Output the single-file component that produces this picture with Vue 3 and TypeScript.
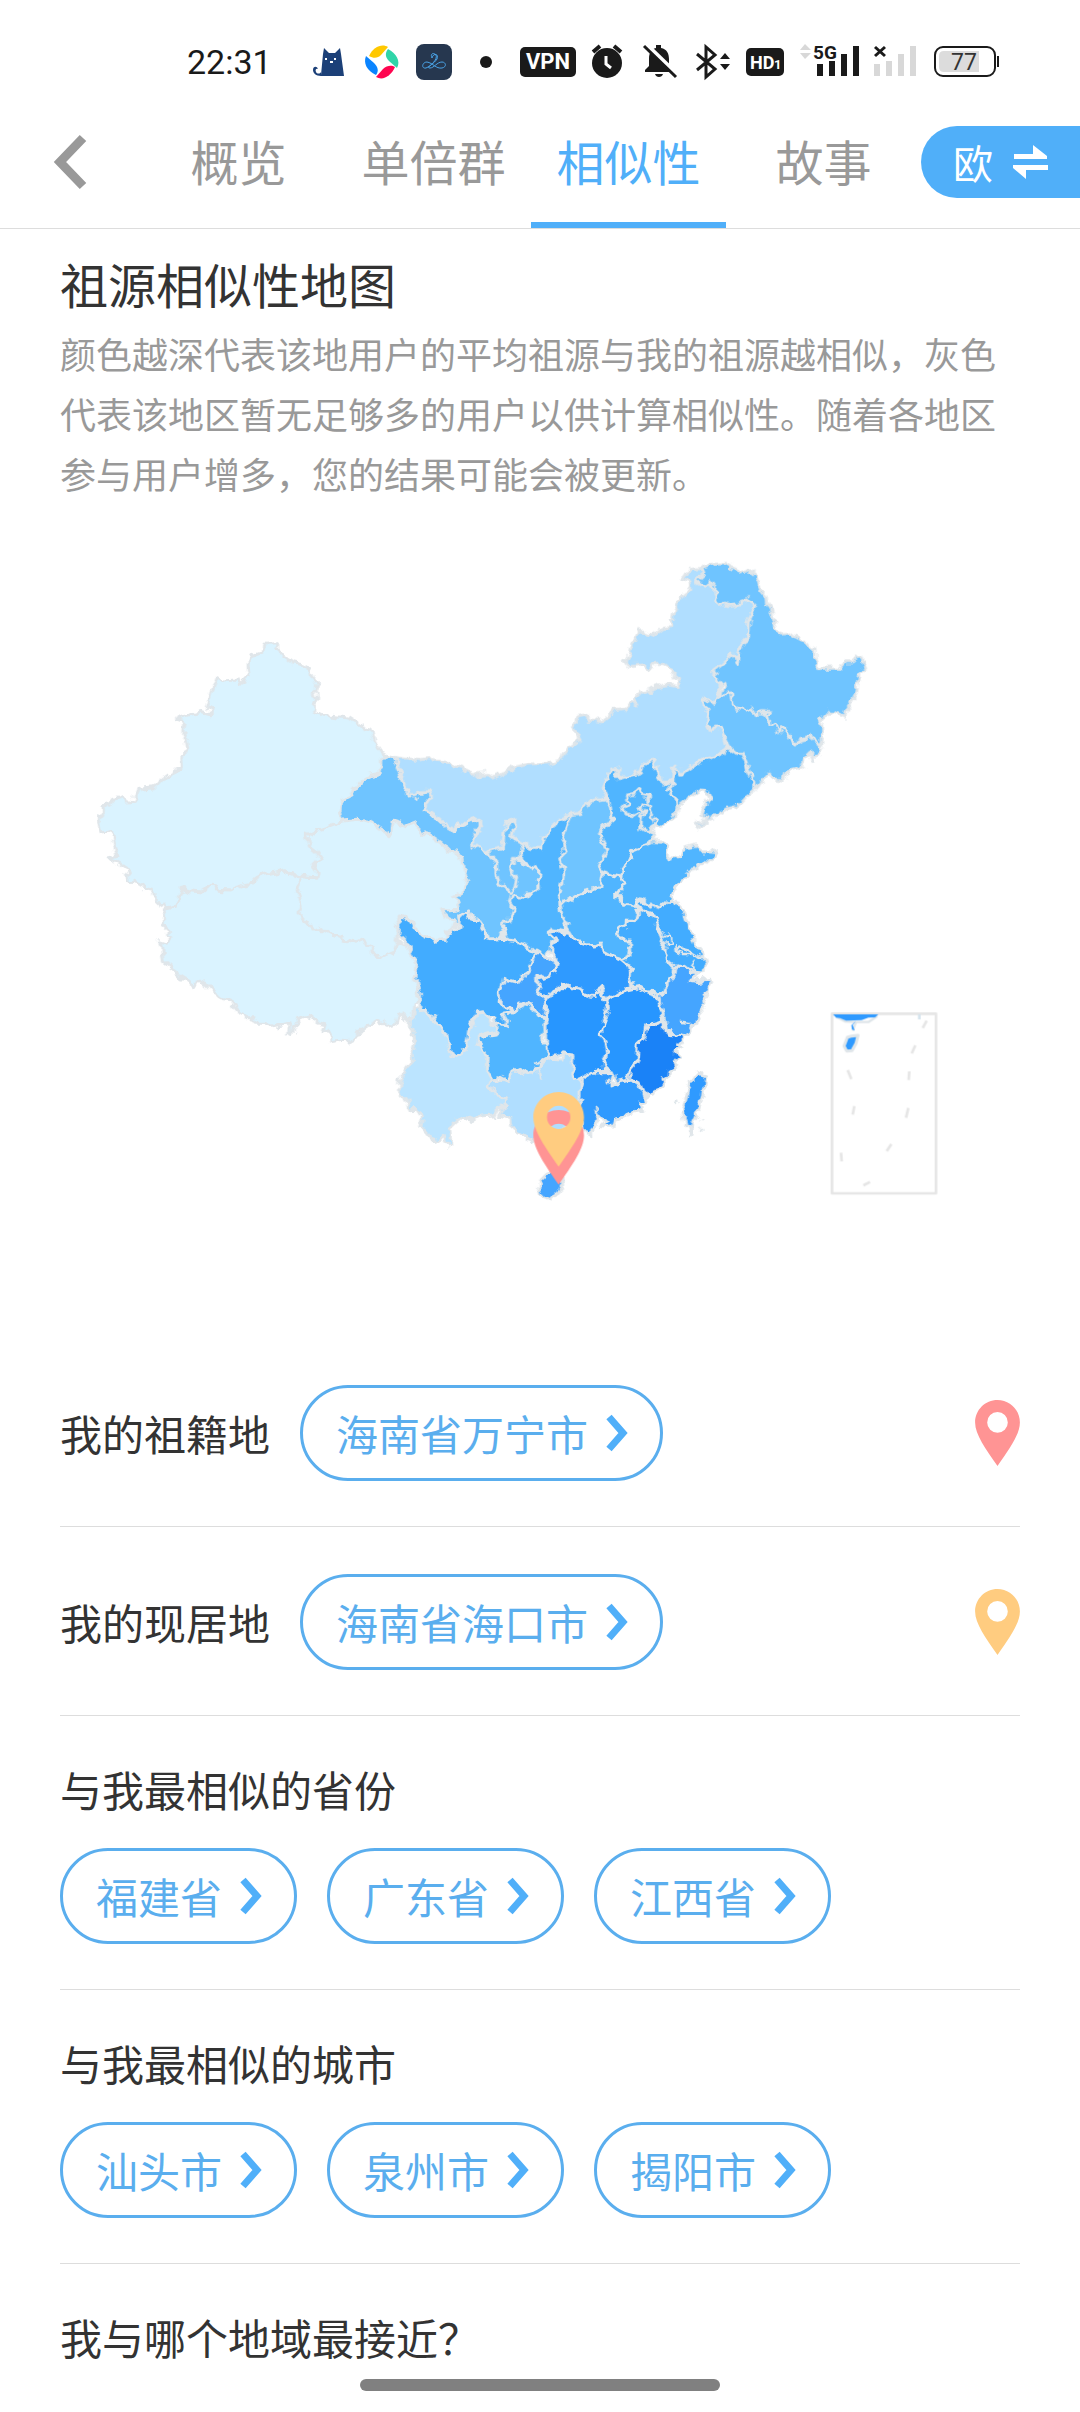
<script setup lang="ts">
import { ref } from 'vue'

interface Shape {
  d: string
  fill: string
}

interface Layer {
  shift: string
  shapes: Shape[]
}

const tabs = ['概览', '单倍群', '相似性', '故事']
const active = ref('相似性')

const places = [
  { label: '我的祖籍地', value: '海南省万宁市', color: '#ff9494' },
  { label: '我的现居地', value: '海南省海口市', color: '#ffcc80' },
]

const groups = [
  { title: '与我最相似的省份', items: ['福建省', '广东省', '江西省'] },
  { title: '与我最相似的城市', items: ['汕头市', '泉州市', '揭阳市'] },
]

const pin =
  'M76 0C34 0 0 34 0 76C0 117 36 166 76 224C116 166 152 117 152 76C152 34 118 0 76 0ZM76 41A35 35 0 1 1 76 111A35 35 0 1 1 76 41Z'

const tint = {
  ice: '#daf3ff',
  pale: '#bbe4ff',
  soft: '#b0deff',
  sky: '#6fc4ff',
  mid: '#50b5ff',
  blue: '#42acff',
  coast: '#45a5ff',
  deep: '#2f9aff',
  deeper: '#2796ff',
  top: '#1a82f7',
}

// Each layer has its own origin; later shapes cover the shared borders of earlier ones.
const layers: Layer[] = [
  {
    shift: 'translate(1140 102)',
    shapes: [
      {
        fill: tint.sky,
        d: 'M14 650L45 653L70 720L90 770L150 755L155 775L130 805L215 868L260 850L300 835L300 860L280 885L285 915L320 940L403 955L425 960L440 975L462 985L477 997L473 1020L475 1045L462 1058L445 1060L440 1074L420 1070L395 1065L400 1100L390 1145L365 1165L370 1185L340 1205L315 1185L310 1160L285 1135L260 1110L235 1130L240 1150L215 1165L200 1150L180 1110L150 1000L0 900L-120 850L-122 815L-114 778L-92 770L-50 718L-30 706L0 700L2 664Z',
      },
    ],
  },
  {
    shift: 'translate(240 342)',
    shapes: [
      {
        fill: tint.ice,
        d: 'M256 864L290 858L304 804L450 790L610 752L655 768L660 785L652 812L662 835L666 860L660 885L678 905L690 922L705 930L722 922L735 936L760 948L800 960L828 966L846 958L858 972L876 980L880 1002L905 1012L940 996L952 960L985 975L1008 1028L1006 1060L1015 1140L1002 1150L998 1190L980 1195L958 1180L950 1215L935 1225L910 1212L888 1202L860 1222L830 1238L810 1266L785 1264L752 1268L752 1250L742 1236L732 1236L738 1212L712 1206L700 1196L680 1190L662 1198L650 1218L640 1222L634 1244L626 1238L630 1208L600 1216L575 1220L555 1210L525 1210L520 1196L500 1196L490 1182L472 1172L450 1145L430 1142L422 1130L400 1115L375 1090L350 1080L340 1100L325 1085L300 1070L290 1055L268 1040L250 1025L246 995L245 980L236 962L262 970L275 955L266 948L268 930L250 915L250 880Z',
      },
      {
        fill: tint.ice,
        d: 'M680 646L700 634L784 604L830 598L855 600L872 606L900 626L932 645L936 604L955 606L980 620L1005 610L1020 625L1035 640L1055 645L1060 655L1090 675L1110 690L1128 690L1132 708L1145 712L1150 745L1162 770L1158 795L1145 812L1138 825L1124 830L1132 850L1135 868L1110 872L1085 872L1105 895L1125 905L1115 925L1098 935L1098 955L1080 958L1070 970L1058 955L1040 952L1030 945L1010 930L1000 905L975 890L955 888L950 900L960 925L952 960L940 996L905 1012L880 1002L876 980L858 972L846 958L828 966L800 960L760 948L735 936L722 922L705 930L690 922L678 905L660 885L666 860L662 835L652 812L660 785L655 768L712 774L716 758L700 738L722 716L708 695L690 682Z',
      },
      {
        fill: tint.ice,
        d: 'M590 68L552 70L548 98L515 108L504 124L505 155L510 172L495 180L478 190L470 180L430 183L410 174L402 200L395 220L382 262L396 270L393 284L382 282L360 274L330 284L290 296L312 304L308 340L318 360L322 380L324 398L302 408L304 448L285 456L268 465L240 485L225 503L178 507L170 525L160 542L134 543L128 530L100 538L92 550L66 562L68 585L55 592L55 605L62 636L80 634L98 642L102 670L112 706L82 714L100 720L118 730L140 745L148 782L165 788L190 802L218 808L226 835L235 852L256 864L290 858L304 804L330 812L362 816L392 796L410 798L412 808L450 810L490 795L520 790L535 770L560 762L585 760L610 752L635 758L655 768L672 770L712 774L716 758L700 738L722 716L708 695L690 682L680 646L700 634L740 622L784 604L778 575L786 538L808 530L820 510L850 478L870 466L900 460L902 424L914 410L890 375L880 350L876 330L858 328L830 310L805 294L770 290L730 286L702 274L700 255L710 240L706 218L714 200L708 185L696 172L690 150L665 134L640 128L612 108L600 95L590 85Z',
      },
    ],
  },
  {
    shift: 'translate(1140 102)',
    shapes: [
      {
        fill: tint.soft,
        d: 'M45 653L120 662L150 658L210 665L225 680L250 688L290 705L320 700L340 714L365 702L400 682L450 672L510 668L545 655L565 625L600 600L580 565L592 530L615 525L630 540L665 545L685 530L700 512L740 508L765 485L768 470L780 460L800 455L840 440L870 435L898 440L895 420L880 395L850 370L820 370L805 388L790 375L745 380L735 365L748 345L752 320L765 300L778 272L820 288L850 265L875 262L870 242L880 235L884 215L890 200L905 170L932 150L930 125L905 118L920 98L935 88L965 85L972 100L948 122L972 135L990 128L1005 148L1010 180L1040 196L1085 190L1105 176L1130 205L1115 225L1105 245L1104 275L1100 290L1085 310L1070 345L1030 375L995 403L1018 435L1020 465L1000 490L968 485L985 515L980 545L990 570L1018 560L1030 590L1040 625L1000 650L950 670L905 705L895 685L880 680L878 725L842 728L832 690L820 660L790 672L785 695L725 715L712 688L695 690L680 720L678 755L682 775L660 780L640 785L625 788L615 792L605 810L600 820L580 822L565 825L540 838L525 850L510 875L490 895L485 925L455 925L430 908L412 900L395 890L402 862L405 838L388 845L375 868L372 890L368 922L345 930L320 940L300 928L282 915L278 890L292 875L305 860L300 835L285 838L260 850L235 848L225 860L210 870L195 858L180 838L155 820L130 805L145 788L155 775L150 755L120 755L105 770L90 770L85 750L65 720L70 710L55 675Z',
      },
      {
        fill: tint.sky,
        d: 'M965 80L1000 73L1040 70L1055 80L1080 90L1095 100L1110 95L1128 110L1135 125L1142 150L1158 170L1160 190L1175 215L1182 240L1190 270L1200 285L1225 282L1250 292L1275 305L1285 318L1305 325L1305 355L1318 385L1348 384L1380 385L1395 368L1415 368L1430 352L1450 350L1452 370L1460 385L1440 400L1436 425L1430 455L1412 490L1400 510L1395 528L1370 520L1350 515L1338 530L1318 540L1325 560L1325 580L1322 612L1242 620L1195 590L1100 520L1050 500L1020 465L1022 448L1040 440L1038 430L1018 435L995 403L1030 375L1062 345L1072 368L1075 335L1085 310L1100 300L1104 275L1105 245L1115 225L1130 205L1105 176L1085 190L1040 196L1015 185L1005 165L1005 145L990 128L972 135L948 122L972 100Z',
      },
      {
        fill: tint.sky,
        d: 'M1020 465L1052 462L1055 490L1075 505L1095 510L1115 504L1125 520L1145 518L1165 522L1170 550L1185 555L1197 580L1215 560L1230 590L1242 610L1260 598L1290 590L1320 612L1327 630L1320 645L1300 650L1302 665L1290 640L1275 655L1272 675L1245 685L1215 695L1210 720L1180 716L1165 702L1150 718L1125 750L1118 715L1105 690L1100 665L1088 640L1070 640L1045 618L1030 590L1018 560L990 570L980 545L985 515L968 490L968 478L985 482L1000 490L1012 475Z',
      },
      {
        fill: tint.mid,
        d: 'M1045 622L1070 640L1088 640L1100 665L1105 690L1118 715L1122 752L1100 768L1085 785L1065 800L1040 806L1015 822L1000 832L975 850L948 866L952 852L975 840L985 830L965 825L975 800L990 775L980 755L950 752L930 765L915 785L895 800L885 770L862 750L878 725L885 700L880 678L895 685L905 705L925 688L950 670L975 662L1000 650L1030 642Z',
      },
      {
        fill: tint.mid,
        d: 'M685 780L670 745L680 720L695 692L712 688L710 715L725 715L755 705L785 695L790 672L820 660L832 690L842 728L878 728L862 750L885 770L895 800L880 835L860 850L845 858L825 860L815 880L820 900L790 915L760 935L745 965L728 990L722 1012L695 1006L665 995L658 975L680 932L665 900L658 880L672 855L695 848L695 820L690 800L675 795Z',
      },
      {
        fill: tint.mid,
        d: 'M775 745L790 763L812 768L800 780L805 795L802 818L788 812L765 828L738 822L732 800L748 790L742 772L765 765Z',
      },
      {
        fill: tint.mid,
        d: 'M780 800L795 793L815 798L810 815L822 835L828 855L815 865L808 880L782 864L785 830L795 815Z',
      },
      {
        fill: tint.sky,
        d: 'M565 825L600 820L615 792L640 785L682 778L690 800L695 820L695 848L672 855L658 880L665 900L680 932L658 975L668 1000L662 1035L640 1052L600 1060L570 1078L540 1092L538 1060L548 1030L550 990L542 960L555 925L545 890L560 860Z',
      },
      {
        fill: tint.sky,
        d: 'M320 940L345 930L368 922L375 868L388 845L405 838L402 862L395 890L412 900L432 912L423 935L423 958L403 955L403 972L392 990L398 1005L410 1010L405 1040L390 1055L375 1042L355 1025L350 995L350 970L335 955Z',
      },
      {
        fill: tint.mid,
        d: 'M575 822L540 838L525 850L510 875L490 895L485 925L455 925L432 912L423 935L425 960L440 975L462 985L477 997L473 1020L475 1045L462 1058L445 1060L440 1074L420 1070L395 1065L388 1085L400 1100L395 1125L390 1145L368 1148L365 1165L378 1182L370 1195L425 1210L460 1230L500 1250L515 1225L515 1205L532 1195L510 1175L510 1165L560 1172L565 1160L548 1130L540 1092L538 1060L548 1030L550 990L542 960L555 925L545 890L560 860Z',
      },
    ],
  },
  {
    shift: 'translate(1140 1122)',
    shapes: [
      {
        fill: tint.mid,
        d: 'M540 72L570 58L600 40L640 32L662 15L668 -22L695 -14L722 -8L740 5L710 45L735 75L780 80L770 118L740 118L738 138L715 155L722 180L750 185L745 235L725 240L695 230L668 215L665 190L640 195L620 190L595 185L580 175L565 150L558 128L548 110Z',
      },
      {
        fill: tint.blue,
        d: 'M880 60L895 80L912 90L918 115L928 135L932 165L945 190L970 220L978 250L975 275L930 275L885 265L850 240L855 200L840 150L820 115L780 90L775 60L800 70L840 72L865 65Z',
      },
      {
        fill: tint.blue,
        d: 'M778 85L800 98L820 105L832 125L828 150L840 155L850 180L845 205L858 220L862 245L885 258L880 295L860 310L858 330L835 350L815 338L800 335L780 325L758 325L750 290L752 265L735 250L725 240L750 230L748 180L722 180L715 155L738 138L740 118L765 122L778 105Z',
      },
      {
        fill: tint.coast,
        d: 'M885 262L910 262L930 278L955 275L948 290L925 300L960 305L992 298L995 308L985 330L975 345L980 355L968 370L972 385L955 405L950 425L935 440L925 460L905 470L880 460L862 450L855 415L845 400L838 370L832 350L855 335L860 312L880 295Z',
      },
      {
        fill: tint.deep,
        d: 'M560 150L570 165L595 185L620 190L640 195L665 190L668 215L695 230L725 240L745 255L750 280L755 325L715 335L670 362L665 325L640 350L600 328L545 320L500 355L470 320L470 295L530 270L535 250L515 225L515 195L532 178L508 155L530 150L545 160Z',
      },
      {
        fill: tint.deeper,
        d: 'M670 365L700 348L725 335L750 330L780 322L800 335L830 345L835 370L845 395L850 425L830 430L800 440L795 470L775 490L772 530L750 570L745 602L710 612L700 580L675 570L672 545L680 520L672 480L662 455L675 420L685 380Z',
      },
      {
        fill: tint.top,
        d: 'M850 420L855 450L870 460L905 465L908 478L895 495L905 502L885 515L898 530L885 545L890 560L870 570L865 590L850 598L845 618L828 628L818 645L800 650L790 640L785 615L768 605L748 600L752 570L765 555L772 530L775 490L795 470L800 440L825 438Z',
      },
      {
        fill: tint.deeper,
        d: 'M500 360L515 340L545 330L550 318L575 325L600 328L620 345L640 350L645 335L662 328L670 365L685 380L675 420L662 455L672 480L680 520L672 545L675 570L640 575L625 600L605 595L600 605L582 595L575 560L578 530L545 520L535 530L505 535L498 500L500 475L495 420L498 380Z',
      },
      {
        fill: tint.deep,
        d: 'M605 605L610 590L625 592L640 575L665 575L700 575L705 590L685 605L690 615L720 605L750 600L780 612L795 650L800 665L780 670L785 690L745 698L730 715L705 720L698 742L665 740L680 725L655 710L650 735L635 750L635 770L620 762L610 745L600 700L590 670Z',
      },
      {
        fill: tint.soft,
        d: 'M330 600L370 605L390 580L420 570L450 580L475 560L510 538L545 540L550 518L578 522L578 545L575 580L600 605L600 650L590 700L540 760L460 782L432 768L400 750L395 720L378 712L355 705L362 685L382 675L380 655L345 645L322 615Z',
      },
      {
        fill: tint.pale,
        d: 'M105 385L135 385L165 430L195 455L215 530L258 510L265 460L295 395L320 395L330 430L380 425L390 440L350 455L300 470L290 495L320 510L320 560L332 600L325 620L345 645L380 655L382 672L350 685L340 705L305 708L280 722L245 712L212 742L215 795L205 798L190 772L160 782L125 740L130 715L110 688L90 690L75 645L58 648L60 600L75 575L100 545L95 520L103 490L102 445L85 435L85 420L105 410Z',
      },
      {
        fill: tint.mid,
        d: 'M365 400L400 395L405 385L435 370L455 378L465 395L480 415L497 420L498 455L485 478L500 490L505 535L470 558L445 578L420 565L395 580L385 605L355 590L335 602L320 570L322 515L295 500L295 470L350 462L352 432L385 440Z',
      },
      {
        fill: tint.coast,
        d: 'M468 210L500 230L530 250L532 270L495 290L470 295L470 320L485 340L498 360L492 415L480 410L465 385L435 370L400 390L370 380L348 345L365 300L415 310L440 280L450 240L465 235Z',
      },
      {
        fill: tint.blue,
        d: 'M58 112L85 115L98 135L105 150L125 160L135 172L160 175L170 190L178 178L198 178L198 158L215 155L240 140L240 110L260 90L270 115L300 125L315 150L315 175L345 180L370 178L410 185L430 195L455 208L470 215L460 235L440 280L415 310L370 298L365 320L350 345L372 380L395 390L385 400L365 402L385 435L350 432L345 418L320 410L312 392L295 395L280 420L268 440L265 460L258 510L225 530L210 510L195 455L165 430L160 410L148 405L135 385L120 392L118 340L108 300L110 250L98 230L85 190L55 165L60 140Z',
      },
      {
        fill: tint.coast,
        d: 'M500 880L520 875L545 885L548 915L535 940L520 948L508 960L498 950L482 945L476 925L480 900Z',
      },
      {
        fill: tint.deep,
        d: 'M955 578L978 585L972 610L968 650L955 690L938 725L936 765L928 740L918 728L908 690L918 650L930 610L945 588Z',
      },
    ],
  },
  {
    shift: 'translate(1140 102)',
    shapes: [
      {
        fill: tint.mid,
        d: 'M820 900L855 905L865 918L862 945L880 955L900 948L905 930L945 918L965 935L1012 938L998 965L970 962L950 985L925 990L915 1010L900 1022L875 1065L868 1088L845 1085L838 1102L820 1092L808 1098L795 1080L772 1075L765 1098L735 1095L725 1078L710 1068L718 1050L735 1035L725 1012L728 990L745 965L755 940L790 915Z',
      },
    ],
  },
]

// Dashes of the inset sea boundary
const dashes =
  'M320 62L308 84M286 136L275 160M268 214L266 240M265 324L258 353M214 432L200 453M150 546L130 556M63 458L65 484M103 318L98 344M83 210L94 237'
</script>

<template>
  <div class="screen">
    <div class="status">
      <span class="clock">22:31</span>
      <div class="status-icons">
        <svg width="36" height="36" viewBox="0 0 36 36">
          <path fill="#1c4078" d="M9 31L11 10L12 4L17 9H23L28 4L29 10L32 32H9C4 32 1 29 1 26C1 22 5 22 6 25C4 24 3 26 4 28C5 30 8 30 9 28Z" />
          <path stroke="#fff" stroke-width="2" d="M13 15h2M22 15h2M18 18h3" />
        </svg>
        <svg width="36" height="36" viewBox="0 0 36 36">
          <path fill="#ffc800" d="M5 12C9 3 18 -1 24 3L17 11C14 14 10 15 5 12Z" />
          <path fill="#30d5a8" d="M24 5C32 9 37 17 33 24L25 17C21 13 21 9 24 5Z" />
          <path fill="#ff0550" d="M31 23C27 32 19 37 12 33L19 25C23 21 28 21 31 23Z" />
          <path fill="#0a84ff" d="M12 31C3 27 -1 19 2 12L10 19C14 23 15 27 12 31Z" />
        </svg>
        <svg width="36" height="36" viewBox="0 0 36 36">
          <rect width="36" height="36" rx="8" fill="#26374f" />
          <path fill="none" stroke="#4aa3e6" stroke-width="1" d="M16 14C14 10 17 8 20 11C22 15 15 22 10 24C5 25 6 18 11 18C17 19 20 25 26 24C31 23 30 18 26 18C21 18 18 24 14 24C9 24 18 20 21 15C23 9 17 9 16 14" />
        </svg>
        <svg width="36" height="36" viewBox="0 0 36 36"><circle cx="18" cy="18" r="6" fill="#1a1a1a" /></svg>
        <span class="badge">VPN</span>
        <svg width="32" height="36" viewBox="0 0 32 36">
          <circle cx="15" cy="19" r="15" fill="#1a1a1a" />
          <path fill="none" stroke="#1a1a1a" stroke-width="4" d="M1 8L8 2M22 2L29 8" />
          <path fill="none" stroke="#fff" stroke-width="3" d="M14 12V20L19 24" />
        </svg>
        <svg width="40" height="36" viewBox="0 0 40 36">
          <path fill="#1a1a1a" d="M16 1H21V4C27 5 29 10 29 15V22L33 28H5V26L9 22V15C9 9 11 5 16 4ZM15 30H23C22 34 16 34 15 30Z" />
          <path stroke="#fff" stroke-width="4" d="M6 0L38 31" />
          <path stroke="#1a1a1a" stroke-width="3" d="M4 2L36 33" />
        </svg>
        <svg width="34" height="36" viewBox="0 0 34 36">
          <path fill="none" stroke="#1a1a1a" stroke-width="3" d="M1 10L19 25L10 33V3L19 11L1 26" />
          <path fill="#1a1a1a" d="M29 9L34 15H24ZM24 20H34L29 26Z" />
        </svg>
        <svg width="38" height="36" viewBox="0 0 38 36">
          <rect y="4" width="38" height="28" rx="5" fill="#1a1a1a" />
          <text x="4" y="25" class="tiny" font-size="18" fill="#fff">HD</text>
          <text x="28" y="25" class="tiny" font-size="13" fill="#fff">1</text>
        </svg>
        <svg width="58" height="36" viewBox="0 0 58 36">
          <path fill="#d8d8d8" d="M5 0L11 6H0ZM0 9H11L5 15Z" />
          <text x="13" y="15" class="tiny" font-size="19" fill="#1a1a1a">5G</text>
          <path fill="#1a1a1a" d="M17 20h6v12h-6ZM29 17h6v15h-6ZM41 10h6v22h-6ZM53 2h6v30h-6Z" />
        </svg>
        <svg width="44" height="36" viewBox="0 0 44 36">
          <path stroke="#1a1a1a" stroke-width="3" d="M1 3L11 12M11 3L1 12" />
          <path fill="#d8d8d8" d="M0 20h6v12h-6ZM12 17h6v15h-6ZM24 10h6v22h-6ZM36 2h6v30h-6Z" />
        </svg>
        <svg width="66" height="36" viewBox="0 0 66 36">
          <rect x="1" y="3" width="60" height="29" rx="8" fill="#fff" stroke="#1a1a1a" stroke-width="2" />
          <path fill="#dcdcdc" d="M10 7H45V28H10Q5 28 5 23V12Q5 7 10 7Z" />
          <path stroke="#1a1a1a" stroke-width="2" d="M64 12V23" />
          <text x="17" y="26" font-family="Roboto, sans-serif" font-size="23" fill="#333">77</text>
        </svg>
      </div>
    </div>

    <header class="bar">
      <button class="back" aria-label="返回">
        <svg width="32" height="54" viewBox="0 0 32 54"><path fill="none" stroke="#999" stroke-width="9" d="M29 3L6 27L29 51" /></svg>
      </button>
      <nav class="tabs">
        <button v-for="tab in tabs" :key="tab" class="tab" :class="{ on: tab === active }" @click="active = tab">{{ tab }}</button>
      </nav>
      <button class="switch">
        <span>欧</span>
        <svg width="36" height="36" viewBox="0 0 36 36"><path fill="#fff" d="M1 10H20V1L34 12V15H1ZM35 21H0V24L13 35V26H35Z" /></svg>
      </button>
    </header>

    <main>
      <section class="intro">
        <h1>祖源相似性地图</h1>
        <p>颜色越深代表该地用户的平均祖源与我的祖源越相似，灰色代表该地区暂无足够多的用户以供计算相似性。随着各地区参与用户增多，您的结果可能会被更新。</p>
      </section>

      <svg class="map" viewBox="0 0 3240 2496">
        <!-- Breaks the straight segments up into natural, uneven borders -->
        <filter id="rough" filterUnits="userSpaceOnUse" x="0" y="0" width="3240" height="2496" color-interpolation-filters="sRGB">
          <feTurbulence type="fractalNoise" baseFrequency="0.04" numOctaves="2" seed="4" />
          <feDisplacementMap in="SourceGraphic" scale="30" xChannelSelector="R" yChannelSelector="G" />
        </filter>
        <g filter="url(#rough)">
          <g v-for="(layer, i) in layers" :key="i" :transform="layer.shift">
            <path v-for="(s, j) in layer.shapes" :key="j" :d="s.d" :fill="s.fill" class="province" />
          </g>
          <g transform="translate(1140 1122)">
            <path class="line" d="M888 195L890 215L905 205L930 212L950 225L970 240M888 215L900 222L935 222M850 165L868 160L872 185L858 188M948 240L935 260L945 275M900 428L930 432M645 680L650 710L685 725M475 570L482 595" />
            <path class="line" d="M886 662L890 672M958 716L962 720M958 750L964 750" />
          </g>
        </g>
        <g transform="translate(2460 1482)">
          <rect x="36" y="41" width="312" height="539" fill="#fff" class="frame" />
          <path class="line" d="M48 50L75 64L108 66L98 92M108 66L145 66L172 48" />
          <path :fill="tint.deep" d="M39 43H175L165 52L145 53L125 60L78 62L60 54L48 53ZM108 62L98 75L104 92L96 88L94 76Z" />
          <path :fill="tint.deep" class="province" d="M82 112L95 108L114 106L108 130L96 152L80 153L72 138Z" />
          <path class="dash" :d="dashes" />
          <path class="frame faint" d="M298 43V58" />
        </g>
        <path :d="pin" fill="#ff9494" transform="translate(1600 1812)" fill-rule="evenodd" />
        <path :d="pin" fill="#ffcc80" transform="translate(1600 1758)" fill-rule="evenodd" />
      </svg>

      <div class="body">
        <section v-for="p in places" :key="p.label" class="row">
          <h2>{{ p.label }}</h2>
          <button class="chip">
            {{ p.value }}
            <svg width="21" height="36" viewBox="0 0 21 36"><path fill="none" stroke="#50aff9" stroke-width="7" d="M3 2L17 18L3 34" /></svg>
          </button>
          <svg class="marker" width="45" height="66" viewBox="0 0 152 224"><path :d="pin" :fill="p.color" fill-rule="evenodd" /></svg>
        </section>

        <section v-for="g in groups" :key="g.title" class="group">
          <h2>{{ g.title }}</h2>
          <div class="chips">
            <button v-for="item in g.items" :key="item" class="chip">
              {{ item }}
              <svg width="21" height="36" viewBox="0 0 21 36"><path fill="none" stroke="#50aff9" stroke-width="7" d="M3 2L17 18L3 34" /></svg>
            </button>
          </div>
        </section>

        <section class="group last">
          <h2>我与哪个地域最接近？</h2>
        </section>
      </div>
    </main>

    <div class="home"></div>
  </div>
</template>

<style>
body {
  background: #fff;
}
</style>

<style scoped>
.screen {
  min-height: 100vh;
  background: #fff;
  color: #333;
  font-family: "Noto Sans CJK SC", sans-serif;
}
.screen * {
  box-sizing: border-box;
}
svg {
  display: block;
  flex: none;
  overflow: visible;
}
button {
  margin: 0;
  padding: 0;
  border: 0;
  background: none;
  font: inherit;
  color: inherit;
}
h1,
h2,
p {
  margin: 0;
  font-weight: 400;
}
.status {
  height: 96px;
  padding: 28px 80px 0 187px;
  display: flex;
  align-items: center;
  justify-content: space-between;
  color: #1a1a1a;
}
.clock {
  font: 34px/36px Roboto, sans-serif;
}
.status-icons {
  display: flex;
  align-items: center;
  gap: 16px;
}
.badge {
  width: 56px;
  height: 30px;
  border-radius: 5px;
  background: #1a1a1a;
  color: #fff;
  font: 700 22px/30px Roboto, sans-serif;
  text-align: center;
}
.tiny {
  font-family: Roboto, sans-serif;
  font-weight: 700;
}
.bar {
  display: flex;
  align-items: center;
  height: 133px;
  border-bottom: 1px solid #ddd;
}
.back {
  width: 141px;
  padding-left: 54px;
}
.tabs {
  flex: 1;
  align-self: stretch;
  display: flex;
}
.tab {
  flex: 1;
  padding-bottom: 4px;
  border-top: 6px solid transparent;
  border-bottom: 6px solid transparent;
  font-size: 48px;
  color: #999;
  white-space: nowrap;
}
.tab.on {
  color: #50aff9;
  border-bottom-color: #50aff9;
}
.switch {
  width: 159px;
  height: 72px;
  padding-left: 32px;
  border-radius: 36px 0 0 36px;
  background: #50aff9;
  color: #fff;
  font-size: 40px;
  line-height: 68px;
  display: flex;
  align-items: center;
  gap: 20px;
}
.intro {
  padding: 24px 60px 3px;
}
h1 {
  font-size: 48px;
  line-height: 60px;
}
.intro p {
  margin-top: 10px;
  font-size: 36px;
  line-height: 60px;
  color: #999;
}
.map {
  width: 100%;
}
.province {
  stroke: #e0e6ea;
  stroke-width: 9;
  stroke-linejoin: round;
}
.line {
  fill: none;
  stroke: #dfe6ea;
  stroke-width: 7;
  stroke-linejoin: round;
}
.frame {
  stroke: #e6e6e6;
  stroke-width: 8;
  stroke-linejoin: round;
}
.faint {
  stroke: #d5e4ee;
}
.dash {
  fill: none;
  stroke: #e6e6e6;
  stroke-width: 8;
}
.body {
  padding: 0 60px;
}
h2 {
  font-size: 42px;
  line-height: 60px;
}
.row {
  display: flex;
  align-items: center;
  gap: 30px;
  padding: 47px 0 45px;
  border-bottom: 1px solid #ddd;
}
.marker {
  margin-left: auto;
}
.chip {
  height: 96px;
  padding: 0 33px;
  border: 3px solid #5aaeee;
  border-radius: 48px;
  color: #5aaeee;
  font-size: 42px;
  line-height: 60px;
  display: flex;
  align-items: center;
  gap: 18px;
  white-space: nowrap;
}
.group {
  padding: 43px 0 45px;
  border-bottom: 1px solid #ddd;
}
.group.last {
  padding-bottom: 0;
  border-bottom: 0;
}
.chips {
  display: flex;
  gap: 30px;
  margin-top: 29px;
}
.home {
  position: fixed;
  left: 50%;
  bottom: 21px;
  width: 360px;
  height: 12px;
  margin-left: -180px;
  border-radius: 6px;
  background: #808080;
}
</style>
